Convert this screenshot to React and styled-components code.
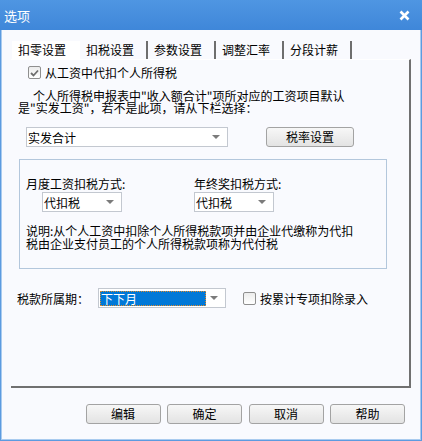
import React from "react";
import styled, { createGlobalStyle } from "styled-components";

const GlobalStyle = createGlobalStyle`
  html, body {
    margin: 0;
    padding: 0;
    background: #ffffff;
  }
  body {
    font-family: "Noto Sans CJK SC", "Noto Sans", sans-serif;
    font-size: 12px;
    color: #000000;
  }
`;

const Window = styled.div`
  width: 422px;
  height: 441px;
  box-sizing: border-box;
  display: flex;
  flex-direction: column;
  background: #5c9be0;
  padding: 0 1px 1px 1px;
`;

const TitleBar = styled.div`
  height: 30px;
  flex: none;
  display: flex;
  align-items: center;
  justify-content: space-between;
  padding: 0 12px 0 4px;
  background: linear-gradient(#4f96e2, #3f87d9);
  color: #ffffff;
  font-size: 13px;
  margin: 0 -1px;
`;

const Client = styled.div`
  flex: 1;
  display: flex;
  flex-direction: column;
  background: #f9fafe;
  border-left: 1px solid #a9cbef;
  border-right: 1px solid #a9cbef;
  border-bottom: 1px solid #a9cbef;
  padding: 10px 0 0 9px;
`;

const TabRow = styled.div`
  display: flex;
  height: 19px;
  margin-left: 1px;
`;

const Tab = styled.div`
  width: 68px;
  box-sizing: border-box;
  height: 18px;
  line-height: 18px;
  padding-left: 6px;
  background: ${(p) => (p.$white ? "#ffffff" : "transparent")};
  border-right: ${(p) => (p.$sep ? "2px solid #6e6e6e" : "2px solid transparent")};
  margin-top: 1px;
`;

const Panel = styled.div`
  width: 400px;
  height: 329px;
  box-sizing: border-box;
  border-top: 1px solid #ffffff;
  border-right: 2px solid #707070;
  border-bottom: 2px solid #707070;
  display: flex;
  flex-direction: column;
  align-items: flex-start;
`;

const CheckRow = styled.label`
  display: flex;
  align-items: center;
  gap: 4px;
  height: 13px;
  margin: ${(p) => p.$margin || "0"};
  line-height: 13px;
`;

const Box = styled.span`
  width: 13px;
  height: 13px;
  box-sizing: border-box;
  border: 1px solid #8f8f8f;
  border-radius: 2px;
  background: linear-gradient(#ececec, #ffffff);
  display: flex;
  align-items: center;
  justify-content: center;
`;

const Para = styled.div`
  margin: 11px 0 0 7px;
  line-height: 12px;
  text-indent: 15px;
  width: 340px;
`;

const Row = styled.div`
  display: flex;
  align-items: center;
  gap: ${(p) => p.$gap || "0px"};
  margin: ${(p) => p.$margin || "0"};
`;

const Label = styled.span`
  width: ${(p) => p.$w}px;
`;

const Combo = styled.div`
  position: relative;
  width: ${(p) => p.$w}px;
  height: 20px;
  box-sizing: border-box;
  border: 1px solid #c3c8d0;
  background: #ffffff;
  display: flex;
  align-items: center;
  padding-left: 1px;
  margin: ${(p) => p.$margin || "0"};
`;

const Arrow = styled.span`
  position: absolute;
  right: 7px;
  top: 7px;
  width: 0;
  height: 0;
  border-left: 4px solid transparent;
  border-right: 4px solid transparent;
  border-top: 4px solid #7b7b7b;
`;

const Highlight = styled.span`
  width: 106px;
  height: 15px;
  box-sizing: border-box;
  background: #0078d7;
  color: #ffffff;
  outline: 1px dotted #e08a2a;
  outline-offset: -1px;
  line-height: 15px;
  padding-left: 1px;
`;

const Button = styled.button`
  width: ${(p) => p.$w || 75}px;
  height: 20px;
  box-sizing: border-box;
  border: 1px solid #a3a3a3;
  border-radius: 3px;
  background: linear-gradient(#f7f7f7, #e3e3e3);
  font-family: "Noto Sans CJK SC", "Noto Sans", sans-serif;
  font-size: 12px;
  color: #000000;
  padding: 0;
  line-height: 18px;
`;

const Group = styled.div`
  width: 368px;
  height: 110px;
  box-sizing: border-box;
  border: 1px solid #b3c7dc;
  margin: 12px 0 0 8px;
  padding: 17px 0 0 6px;
`;

const GroupGrid = styled.div`
  display: grid;
  grid-template-columns: 168px 168px;
  line-height: 13px;
`;

const Note = styled.div`
  margin-top: 12px;
  width: 334px;
  line-height: 13px;
`;

const ButtonBar = styled.div`
  display: flex;
  justify-content: flex-end;
  gap: 6.5px;
  margin-top: 16px;
  padding-right: 15px;
`;

const Check = () => (
  <svg width="9" height="8" viewBox="0 0 9 8">
    <path d="M1 4 L3.5 6.5 L8 1.5" fill="none" stroke="#6e6e6e" strokeWidth="1.8" />
  </svg>
);

const Close = () => (
  <svg width="11" height="11" viewBox="0 0 11 11">
    <path d="M1.5 1.5 L9.5 9.5 M9.5 1.5 L1.5 9.5" stroke="#ffffff" strokeWidth="2.6" />
  </svg>
);

const tabs = ["扣零设置", "扣税设置", "参数设置", "调整汇率", "分段计薪"];

export default function App() {
  return (
    <>
      <GlobalStyle />
      <Window>
        <TitleBar>
          <span>选项</span>
          <Close />
        </TitleBar>
        <Client>
          <TabRow>
            {tabs.map((t, i) => (
              <Tab key={t} $white={i === 0} $sep={i > 0}>
                {t}
              </Tab>
            ))}
          </TabRow>
          <Panel>
            <CheckRow $margin="6px 0 0 17px">
              <Box>
                <Check />
              </Box>
              从工资中代扣个人所得税
            </CheckRow>
            <Para>
              个人所得税申报表中"收入额合计"项所对应的工资项目默认是"实发工资"，若不是此项，请从下栏选择：
            </Para>
            <Row $gap="38px" $margin="13px 0 0 15px">
              <Combo $w={202}>
                实发合计
                <Arrow />
              </Combo>
              <Button $w={88}>税率设置</Button>
            </Row>
            <Group>
              <GroupGrid>
                <span>月度工资扣税方式:</span>
                <span>年终奖扣税方式:</span>
                <Combo $w={80} $margin="2px 0 0 16px">
                  代扣税
                  <Arrow />
                </Combo>
                <Combo $w={80} $margin="2px 0 0 0">
                  代扣税
                  <Arrow />
                </Combo>
              </GroupGrid>
              <Note>
                说明:从个人工资中扣除个人所得税款项并由企业代缴称为代扣税由企业支付员工的个人所得税款项称为代付税
              </Note>
            </Group>
            <Row $margin="19px 0 0 6px">
              <Label $w={81}>税款所属期：</Label>
              <Combo $w={128}>
                <Highlight>下下月</Highlight>
                <Arrow />
              </Combo>
              <CheckRow $margin="0 0 0 17px">
                <Box />
                按累计专项扣除录入
              </CheckRow>
            </Row>
          </Panel>
          <ButtonBar>
            <Button>编辑</Button>
            <Button>确定</Button>
            <Button>取消</Button>
            <Button>帮助</Button>
          </ButtonBar>
        </Client>
      </Window>
    </>
  );
}
